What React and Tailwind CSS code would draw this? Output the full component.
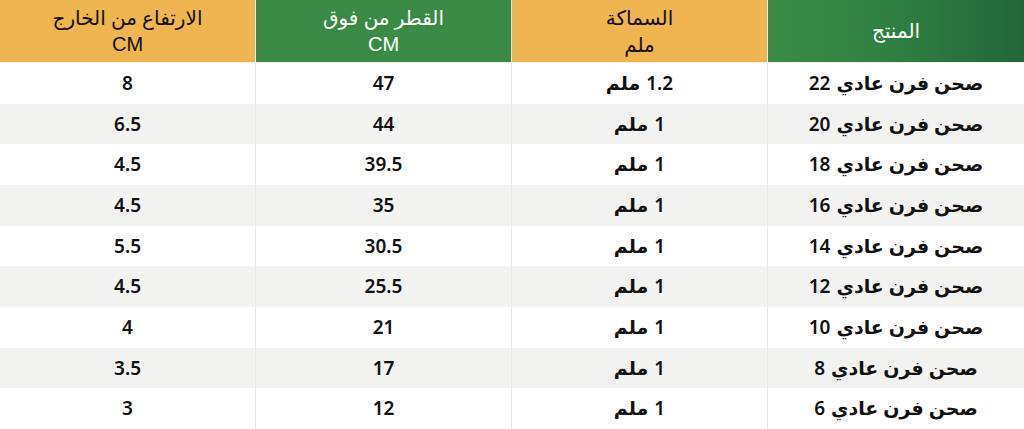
const rows = [
  ['22', '1.2', '47', '8'],
  ['20', '1', '44', '6.5'],
  ['18', '1', '39.5', '4.5'],
  ['16', '1', '35', '4.5'],
  ['14', '1', '30.5', '5.5'],
  ['12', '1', '25.5', '4.5'],
  ['10', '1', '21', '4'],
  ['8', '1', '17', '3.5'],
  ['6', '1', '12', '3'],
];

function Cell({ children, first }) {
  return (
    <div
      className={`flex items-center justify-center gap-[6px] text-[19px] font-semibold ${first ? '' : 'border-r border-[#e8e8e8]'}`}
    >
      {children}
    </div>
  );
}

export default function App() {
  return (
    <div
      dir="rtl"
      className="flex h-[429px] w-[1024px] flex-col bg-white font-['Noto_Sans','DejaVu_Sans',sans-serif] text-[#111]"
    >
      <div className="grid h-[63px] grid-cols-4 border-b border-[#f3efe4]">
        <div className="flex items-center justify-center bg-gradient-to-l from-[#23663a] via-[#2f7f42] to-[#3a8b45] text-[20px] text-white">
          المنتج
        </div>
        <div className="flex flex-col items-center justify-center border-r border-[#f5e9cf] bg-[#efb550] text-[20px] leading-[27px]">
          <span>السماكة</span>
          <span>ملم</span>
        </div>
        <div className="flex flex-col items-center justify-center border-r border-[#d9ead3] bg-[#3a8a45] text-[20px] leading-[27px] text-white">
          <span>القطر من فوق</span>
          <span className="font-['Liberation_Sans',sans-serif]">CM</span>
        </div>
        <div className="flex flex-col items-center justify-center border-r border-[#f5e9cf] bg-[#efb550] text-[20px] leading-[27px]">
          <span>الارتفاع من الخارج</span>
          <span className="font-['Liberation_Sans',sans-serif]">CM</span>
        </div>
      </div>
      <div className="flex flex-1 flex-col">
        {rows.map((r, i) => (
          <div
            key={i}
            className={`grid flex-1 grid-cols-4 ${i % 2 === 1 ? 'bg-[#f2f2f1]' : 'bg-white'}`}
          >
            <Cell first>
              <span>صحن فرن عادي</span>
              <span>{r[0]}</span>
            </Cell>
            <Cell>
              <span>{r[1]}</span>
              <span>ملم</span>
            </Cell>
            <Cell>
              <span>{r[2]}</span>
            </Cell>
            <Cell>
              <span>{r[3]}</span>
            </Cell>
          </div>
        ))}
      </div>
    </div>
  );
}
